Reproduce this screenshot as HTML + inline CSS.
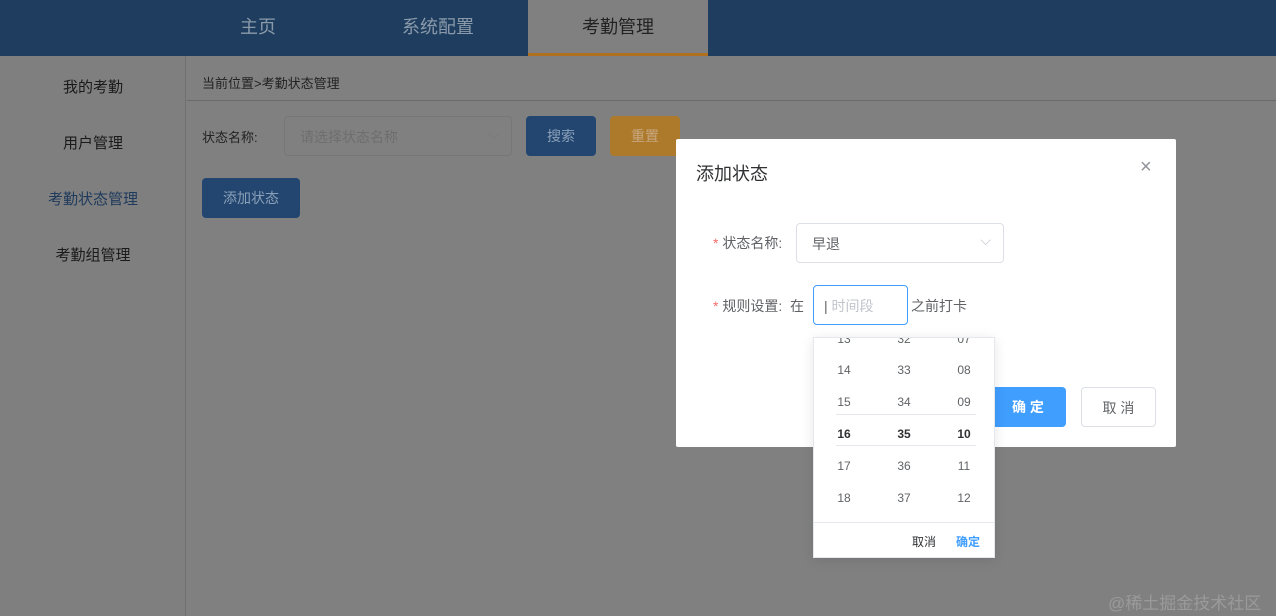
<!DOCTYPE html>
<html><head><meta charset="utf-8"><style>
*{box-sizing:border-box;margin:0;padding:0}
body{width:1276px;height:616px;overflow:hidden;position:relative;background:#808080;font-family:"Liberation Sans","Noto Sans CJK SC",sans-serif;color:#333}
.abs{position:absolute}
.hdr{left:0;top:0;width:1276px;height:56px;background:#1f3e5f}
.tab{top:0;height:56px;line-height:54px;font-size:18px;text-align:center;color:#8a9aaa;width:180px}
.side{left:0;top:56px;width:186px;height:560px;background:#7f7f7f;border-right:1px solid #707070}
.si{left:0;width:186px;text-align:center;font-size:15px;color:#1a1a1a}
.btn{height:40px;line-height:40px;text-align:center;font-size:14px;border-radius:4px;color:#8aa0b8}
.dlg{left:676px;top:139px;width:500px;height:308px;background:#fff;border-radius:2px}
.pk{left:813px;top:337px;width:182px;height:221px;background:#fff;border:1px solid #e4e7ed;box-shadow:0 2px 12px rgba(0,0,0,.1);overflow:hidden}
.c{position:absolute;width:60px;text-align:center;font-size:12px;color:#606266}
</style></head><body>
<div class="abs hdr"></div>
<div class="abs tab" style="left:168px">主页</div>
<div class="abs tab" style="left:348px">系统配置</div>
<div class="abs tab" style="left:528px;background:#808080;color:#222;border-bottom:3px solid #b07020">考勤管理</div>
<div class="abs side"></div>
<div class="abs si" style="top:76px">我的考勤</div>
<div class="abs si" style="top:132px">用户管理</div>
<div class="abs si" style="top:188px;color:#1e3a5c">考勤状态管理</div>
<div class="abs si" style="top:244px">考勤组管理</div>
<div class="abs" style="left:187px;top:100px;width:1089px;height:1px;background:#6a6a6a"></div>
<div class="abs" style="left:202px;top:73px;font-size:13px;color:#222">当前位置&gt;考勤状态管理</div>
<div class="abs" style="left:202px;top:127px;font-size:13px;color:#222">状态名称:</div>
<div class="abs" style="left:284px;top:116px;width:228px;height:40px;border:1px solid #777;border-radius:4px;font-size:14px;color:#6e6e6e;padding:10px 15px">请选择状态名称<span style="position:absolute;right:12px;top:9px;color:#777">⌵</span></div>
<div class="abs btn" style="left:526px;top:116px;width:70px;background:#234670">搜索</div>
<div class="abs btn" style="left:610px;top:116px;width:70px;background:#ad7a2c;color:#c8a880">重置</div>
<div class="abs btn" style="left:202px;top:178px;width:98px;background:#234670">添加状态</div>
<div class="abs" style="left:1260px;top:600px;"></div>
<div class="abs" style="left:1108px;top:589px;font-size:17px;color:#9a9a9a">@稀土掘金技术社区</div>

<div class="abs dlg">
 <div class="abs" style="left:20px;top:21px;font-size:18px;color:#303133">添加状态</div>
 <div class="abs" style="left:464px;top:18px;font-size:20px;color:#909399;line-height:1">×</div>
 <div class="abs" style="left:37px;top:94px;font-size:14px;color:#606266"><span style="color:#f56c6c">*</span> 状态名称:</div>
 <div class="abs" style="left:120px;top:84px;width:208px;height:40px;border:1px solid #dcdfe6;border-radius:4px;font-size:14px;color:#606266;padding:10px 15px">早退<span style="position:absolute;right:12px;top:8px;color:#c0c4cc">⌵</span></div>
 <div class="abs" style="left:37px;top:157px;font-size:14px;color:#606266"><span style="color:#f56c6c">*</span> 规则设置:&nbsp; 在</div>
 <div class="abs" style="left:137px;top:146px;width:95px;height:40px;border:1px solid #409eff;border-radius:4px;font-size:14px;color:#c0c4cc;padding:10px 10px"><span style="color:#606266">|</span> 时间段</div>
 <div class="abs" style="left:235px;top:157px;font-size:14px;color:#606266">之前打卡</div>
 <div class="abs btn" style="left:314px;top:248px;width:76px;background:#409eff;color:#fff;font-weight:bold">确 定</div>
 <div class="abs btn" style="left:405px;top:248px;width:75px;border:1px solid #dcdfe6;color:#606266">取 消</div>
</div>

<div class="abs pk">
 <div class="abs" style="left:22px;top:76px;width:140px;height:1px;background:#e4e7ed"></div>
 <div class="abs" style="left:22px;top:107px;width:140px;height:1px;background:#e4e7ed"></div>
 <div class="c" style="left:0;top:-6px">13</div><div class="c" style="left:60px;top:-6px">32</div><div class="c" style="left:120px;top:-6px">07</div>
 <div class="c" style="left:0;top:25px">14</div><div class="c" style="left:60px;top:25px">33</div><div class="c" style="left:120px;top:25px">08</div>
 <div class="c" style="left:0;top:57px">15</div><div class="c" style="left:60px;top:57px">34</div><div class="c" style="left:120px;top:57px">09</div>
 <div class="c" style="left:0;top:89px;font-weight:bold;color:#303133">16</div><div class="c" style="left:60px;top:89px;font-weight:bold;color:#303133">35</div><div class="c" style="left:120px;top:89px;font-weight:bold;color:#303133">10</div>
 <div class="c" style="left:0;top:121px">17</div><div class="c" style="left:60px;top:121px">36</div><div class="c" style="left:120px;top:121px">11</div>
 <div class="c" style="left:0;top:153px">18</div><div class="c" style="left:60px;top:153px">37</div><div class="c" style="left:120px;top:153px">12</div>
 <div class="abs" style="left:0;top:184px;width:182px;height:1px;background:#e4e7ed"></div>
 <div class="abs" style="left:98px;top:195px;font-size:12px;color:#303133">取消</div>
 <div class="abs" style="left:142px;top:195px;font-size:12px;color:#409eff;font-weight:bold">确定</div>
</div>
</body></html>
